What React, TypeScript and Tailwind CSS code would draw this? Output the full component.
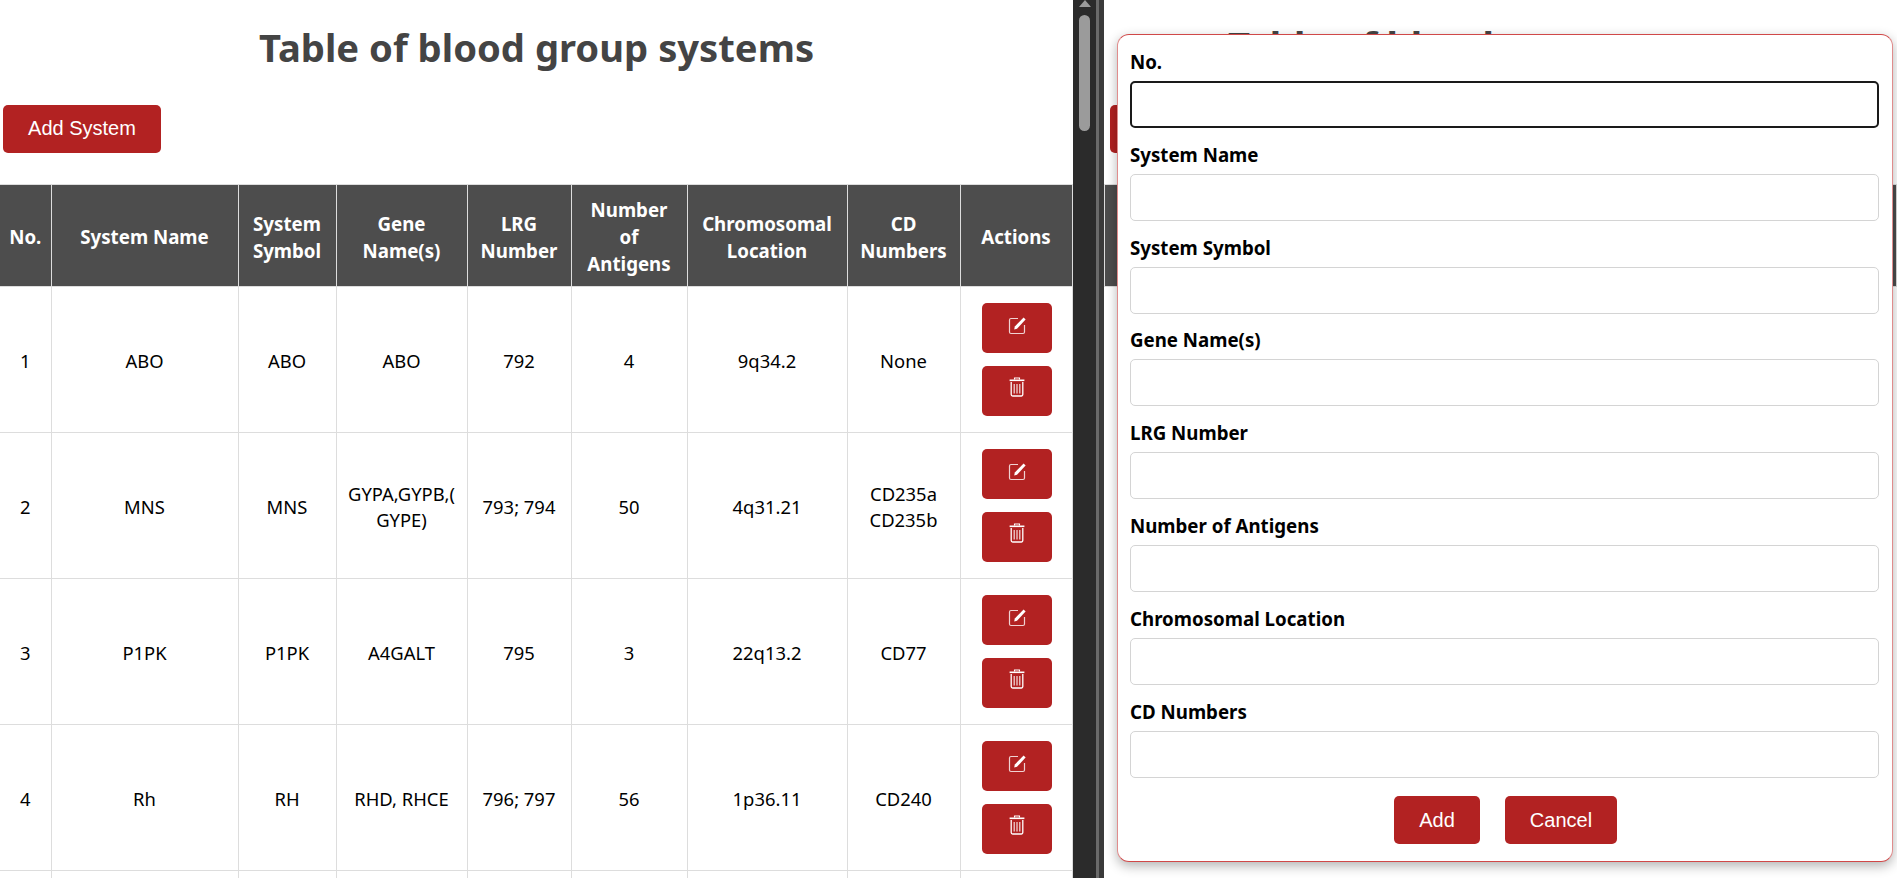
const headers = [
  { lines: ['No.'], w: 'w-[51px]' },
  { lines: ['System Name'], w: 'w-[187px]' },
  { lines: ['System', 'Symbol'], w: 'w-[98px]' },
  { lines: ['Gene', 'Name(s)'], w: 'w-[131px]' },
  { lines: ['LRG', 'Number'], w: 'w-[104px]' },
  { lines: ['Number', 'of', 'Antigens'], w: 'w-[116px]' },
  { lines: ['Chromosomal', 'Location'], w: 'w-[160px]' },
  { lines: ['CD', 'Numbers'], w: 'w-[113px]' },
  { lines: ['Actions'], w: 'w-[112px]' },
]

const rows = [
  ['1', 'ABO', 'ABO', 'ABO', '792', '4', '9q34.2', 'None'],
  ['2', 'MNS', 'MNS', 'GYPA,GYPB,(\nGYPE)', '793; 794', '50', '4q31.21', 'CD235a CD235b'],
  ['3', 'P1PK', 'P1PK', 'A4GALT', '795', '3', '22q13.2', 'CD77'],
  ['4', 'Rh', 'RH', 'RHD, RHCE', '796; 797', '56', '1p36.11', 'CD240'],
  // next row starts right at the bottom of the window, only its lines show
  ['', '', '', '', '', '', '', ''],
]

const fields = [
  'No.',
  'System Name',
  'System Symbol',
  'Gene Name(s)',
  'LRG Number',
  'Number of Antigens',
  'Chromosomal Location',
  'CD Numbers',
]

function EditIcon() {
  return (
    <svg width="19" height="19" viewBox="0 0 19 19" fill="none">
      <path d="M10 2.5H3A1.5 1.5 0 0 0 1.5 4v12A1.5 1.5 0 0 0 3 17.5h12a1.5 1.5 0 0 0 1.5-1.5V9" stroke="white" strokeWidth="1.2" opacity="0.8" />
      <path d="M15.6 1.6 L17.6 3.6 L9 12.8 L6.2 13.4 L6.8 10.6 Z" fill="white" />
    </svg>
  )
}

function TrashIcon() {
  return (
    <svg width="16" height="20" viewBox="0 0 16 20" fill="none" stroke="white">
      <path d="M5.5 2.6V1h5v1.6" strokeWidth="1.1" />
      <path d="M0.6 3.3H15.4" strokeWidth="1.6" />
      <path d="M2.2 5v12.5A1.5 1.5 0 0 0 3.7 19h8.6a1.5 1.5 0 0 0 1.5-1.5V5" strokeWidth="1.3" />
      <path d="M5.2 7v9.5M8 7v9.5M10.8 7v9.5" strokeWidth="1.2" opacity="0.85" />
    </svg>
  )
}

function HeaderRow({ compact }: { compact: boolean }) {
  return (
    <tr className="h-[102px] bg-[#4d4d4d] text-white">
      {headers.map((h, i) => (
        <th
          key={h.lines.join(' ')}
          className={`${compact ? '' : h.w} ${i === 0 && !compact ? 'border-l-0' : ''} border border-[#dddddd] px-0 pt-[2px] text-center text-[18.7px] leading-[27px] font-bold`}
        >
          {compact
            ? null
            : h.lines.map((line) => (
                <span key={line} className="block">
                  {line}
                </span>
              ))}
        </th>
      ))}
    </tr>
  )
}

function BloodTable() {
  return (
    <table className="w-[1072px] table-fixed border-collapse text-[18.4px] leading-[26px] text-black">
      <thead>
        <HeaderRow compact={false} />
      </thead>
      <tbody>
        {rows.map((row, n) => (
          <tr key={n} className="h-[146px]">
            {row.map((cell, i) => (
              <td
                key={i}
                className={`${i === 0 ? 'border-l-0' : ''} border border-[#dddddd] px-1 pt-[2px] text-center whitespace-pre-line`}
              >
                {cell}
              </td>
            ))}
            <td className="border border-[#dddddd] pl-[2px] text-center">
              {row[0] && (
                <div className="flex flex-col items-center gap-[13px]">
                  <button className="flex h-[50px] w-[70px] items-center justify-center rounded-[5px] bg-[#b22222] pb-[5px]">
                    <EditIcon />
                  </button>
                  <button className="flex h-[50px] w-[70px] items-center justify-center rounded-[5px] bg-[#b22222] pb-[8px]">
                    <TrashIcon />
                  </button>
                </div>
              )}
            </td>
          </tr>
        ))}
      </tbody>
    </table>
  )
}

function ScrollDivider() {
  return (
    <div className="flex h-full w-[31px] shrink-0 bg-[#2b2b2b]">
      <div className="flex w-[23px] flex-col items-center">
        <svg width="12" height="8" viewBox="0 0 12 8">
          <path d="M0 7 L6 0 L12 7 Z" fill="#9b9b9b" />
        </svg>
        <div className="mt-[7px] h-[116px] w-[11px] rounded-full bg-[#9b9b9b]" />
      </div>
      <div className="w-[3px] bg-[#6a6a6a]" />
      <div className="flex-1 bg-[#3a3a3a]" />
    </div>
  )
}

function AddModal() {
  return (
    <div className="absolute top-[34px] left-[1117px] flex h-[828px] w-[776px] flex-col rounded-[12px] border border-[#d04848] border-x-[#e08c8c] bg-white pt-[15px] pr-[13px] pl-[12px] shadow-[0_4px_12px_rgba(0,0,0,0.3)]">
      <form className="flex flex-col">
        {fields.map((f, i) => (
          <div key={f} className="mb-[14.8px] flex flex-col">
            <label className="mb-[7px] text-[18.7px] leading-[24px] font-bold text-black">{f}</label>
            {i === 0 ? (
              <input type="text" className="h-[47px] w-full rounded-[5px] border-2 border-[#1a1a1a] bg-white outline-none" />
            ) : (
              <input type="text" className="h-[47px] w-full rounded-[5px] border border-[#d4d4d4] bg-white outline-none" />
            )}
          </div>
        ))}
        <div className="mt-[4px] flex justify-center gap-[25px] pl-[2px]">
          <button type="button" className="h-[48px] w-[86px] rounded-[5px] bg-[#b22222] pb-[1px] font-['Liberation_Sans',sans-serif] text-[20px] text-white">
            Add
          </button>
          <button type="button" className="h-[48px] w-[112px] rounded-[5px] bg-[#b22222] pb-[1px] font-['Liberation_Sans',sans-serif] text-[20px] text-white">
            Cancel
          </button>
        </div>
      </form>
    </div>
  )
}

const titleClass = 'text-center text-[38.2px] leading-[46px] font-bold text-[#444444]'
const addButtonClass =
  "block h-[48px] w-[158px] rounded-[5px] bg-[#b22222] pb-[2px] font-['Liberation_Sans',sans-serif] text-[20px] text-white"

export default function App() {
  return (
    <div className="relative flex h-[878px] w-[1897px] overflow-hidden bg-white font-['Noto_Sans',sans-serif]">
      <div className="w-[1073px] shrink-0 pt-[24px]">
        <h1 className={titleClass}>Table of blood group systems</h1>
        <button className={`${addButtonClass} mt-[35px] ml-[3px]`}>Add System</button>
        <div className="mt-[31px]">
          <BloodTable />
        </div>
      </div>
      <ScrollDivider />
      {/* second window sits behind the dialog, only its edges show */}
      <div className="min-w-0 flex-1 overflow-hidden pt-[22px]">
        <h1 className={`${titleClass} pl-[10px]`}>Table of blood group systems</h1>
        <button className={`${addButtonClass} mt-[37px] ml-[6px]`}>Add System</button>
        <table className="mt-[31px] w-full table-fixed border-collapse">
          <thead>
            <HeaderRow compact />
          </thead>
        </table>
      </div>
      <AddModal />
    </div>
  )
}
